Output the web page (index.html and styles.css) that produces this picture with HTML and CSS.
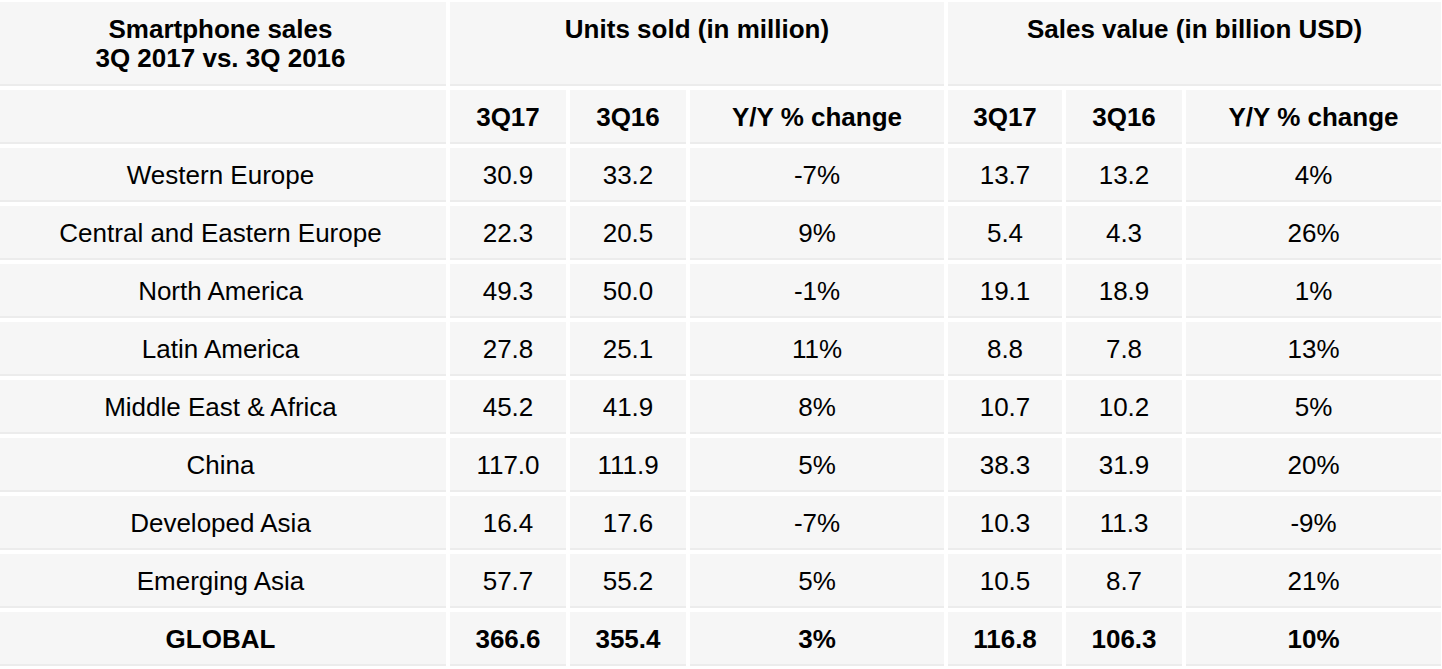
FILE: index.html
```html
<!DOCTYPE html>
<html lang="en">
<head>
<meta charset="utf-8">
<title>Smartphone sales 3Q 2017 vs. 3Q 2016</title>
<link rel="stylesheet" href="styles.css">
</head>
<body>
<table class="sales">
  <colgroup>
    <col class="c-region">
    <col class="c-num">
    <col class="c-num">
    <col class="c-chg">
    <col class="c-num2">
    <col class="c-num">
    <col class="c-chg2">
  </colgroup>
  <thead>
    <tr class="group">
      <th>Smartphone sales<br>3Q 2017 vs. 3Q 2016</th>
      <th colspan="3">Units sold (in million)</th>
      <th colspan="3">Sales value (in billion USD)</th>
    </tr>
    <tr class="sub">
      <th></th>
      <th>3Q17</th>
      <th>3Q16</th>
      <th>Y/Y % change</th>
      <th>3Q17</th>
      <th>3Q16</th>
      <th>Y/Y % change</th>
    </tr>
  </thead>
  <tbody>
    <tr><td>Western Europe</td><td>30.9</td><td>33.2</td><td>-7%</td><td>13.7</td><td>13.2</td><td>4%</td></tr>
    <tr><td>Central and Eastern Europe</td><td>22.3</td><td>20.5</td><td>9%</td><td>5.4</td><td>4.3</td><td>26%</td></tr>
    <tr><td>North America</td><td>49.3</td><td>50.0</td><td>-1%</td><td>19.1</td><td>18.9</td><td>1%</td></tr>
    <tr><td>Latin America</td><td>27.8</td><td>25.1</td><td>11%</td><td>8.8</td><td>7.8</td><td>13%</td></tr>
    <tr><td>Middle East &amp; Africa</td><td>45.2</td><td>41.9</td><td>8%</td><td>10.7</td><td>10.2</td><td>5%</td></tr>
    <tr><td>China</td><td>117.0</td><td>111.9</td><td>5%</td><td>38.3</td><td>31.9</td><td>20%</td></tr>
    <tr><td>Developed Asia</td><td>16.4</td><td>17.6</td><td>-7%</td><td>10.3</td><td>11.3</td><td>-9%</td></tr>
    <tr><td>Emerging Asia</td><td>57.7</td><td>55.2</td><td>5%</td><td>10.5</td><td>8.7</td><td>21%</td></tr>
    <tr class="total"><td>GLOBAL</td><td>366.6</td><td>355.4</td><td>3%</td><td>116.8</td><td>106.3</td><td>10%</td></tr>
  </tbody>
</table>
</body>
</html>
```

FILE: styles.css
```css
html, body {
  margin: 0;
  padding: 0;
  background: #ffffff;
  overflow: hidden;
}

.sales {
  font-family: "Liberation Sans", Arial, sans-serif;
  font-size: 26px;
  color: #000;
  border-collapse: separate;
  border-spacing: 4px;
  table-layout: fixed;
  width: 1454px;
  margin: -2px 0 0 -9px;
}

.c-region { width: 451px; }
.c-num { width: 116px; }
.c-num2 { width: 114px; }
.c-chg { width: 254px; }
.c-chg2 { width: 255px; }

.sales th,
.sales td {
  background: #f6f6f6;
  border-bottom: 2px solid #ececec;
  padding: 2px 0 0;
  text-align: center;
  vertical-align: middle;
  box-sizing: border-box;
}

.sales th {
  font-weight: bold;
}

.group th {
  vertical-align: top;
  padding-top: 13px;
  line-height: 29px;
}

.group { height: 84px; }
.sub { height: 54px; }
.sales tbody tr { height: 54px; }

.total td {
  font-weight: bold;
}
```
